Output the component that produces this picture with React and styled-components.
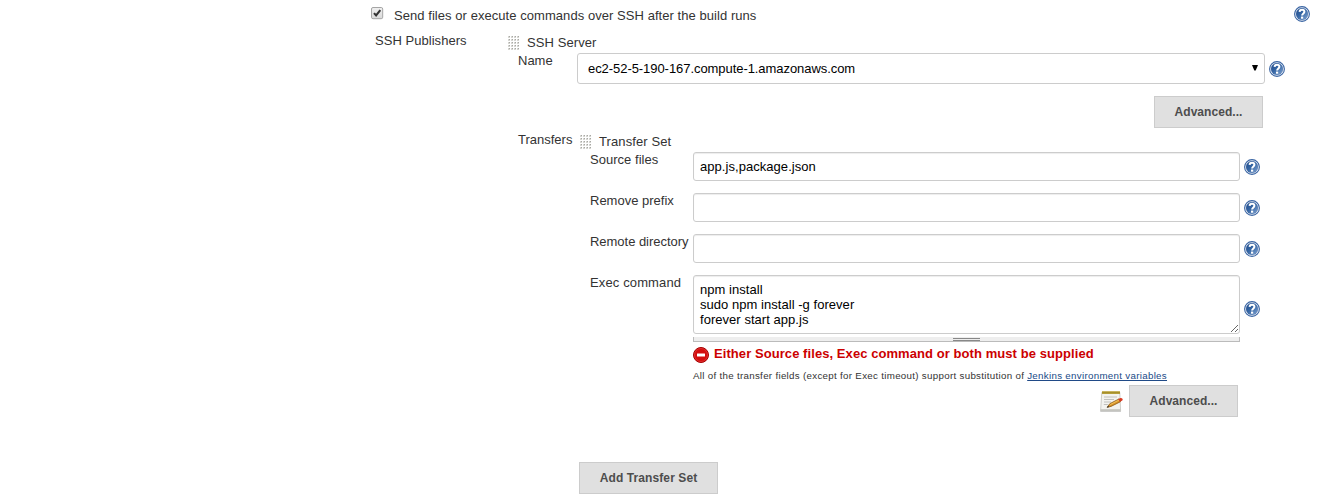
import React from "react";
import styled, { createGlobalStyle } from "styled-components";

const GlobalStyle = createGlobalStyle`
  *, *::before, *::after { box-sizing: border-box; }
  body { margin: 0; background: #fff; overflow: hidden; }
  body, input, textarea, button {
    font-family: "Liberation Sans", Arial, sans-serif;
    font-size: 13px;
    line-height: 15px;
    color: #333;
  }
`;

const Page = styled.main`
  width: 1337px;
  height: 500px;
  overflow: hidden;
  padding-left: 371px;
`;

const Text = styled.span`
  display: inline-block;
  white-space: nowrap;
  letter-spacing: ${(p) => p.$spacing || 0}px;
`;

const OptionRow = styled.label`
  display: flex;
  align-items: flex-start;
  width: 939px;
  height: 33px;
  padding-top: 6px;
`;

const CheckSvg = styled.svg`
  width: 13px;
  height: 13px;
  margin: 1px 10px 0 0;
  flex: none;
`;

const OptionText = styled(Text)`
  flex: 1;
  margin-top: 2px;
`;

const Section = styled.section`
  display: flex;
  align-items: flex-start;
`;

const SectionLabel = styled.div`
  width: ${(p) => p.$width}px;
  flex: none;
  margin-left: ${(p) => p.$left || 0}px;
  white-space: nowrap;
`;

const Block = styled.div`
  display: flex;
  flex-direction: column;
`;

const BlockTitle = styled.div`
  display: flex;
  align-items: flex-start;
  gap: 8px;
  height: ${(p) => p.$height}px;
  padding-top: 2px;
`;

const HandleSvg = styled.svg`
  width: 11px;
  height: 14px;
  margin-top: 1px;
  flex: none;
`;

const Field = styled.div`
  display: flex;
  align-items: ${(p) => p.$align || "flex-start"};
  height: ${(p) => p.$height}px;
  padding-left: 10px;
`;

const FieldLabel = styled.label`
  align-self: flex-start;
  width: ${(p) => p.$width}px;
  flex: none;
  white-space: nowrap;
  letter-spacing: ${(p) => p.$spacing || 0}px;
`;

const SelectBox = styled.div`
  display: flex;
  align-items: center;
  justify-content: space-between;
  width: 688px;
  height: 31px;
  padding: 0 6px 0 10px;
  margin-right: 4px;
  border: 1px solid #ccc;
  border-radius: 3px;
  color: #000;
`;

const Arrow = styled.svg`
  width: 6px;
  height: 6px;
  margin-top: -1px;
`;

const Input = styled.input`
  width: 547px;
  height: 29px;
  padding: 0 6px;
  margin: 0 4px 0 0;
  border: 1px solid #ccc;
  border-radius: 3px;
  box-shadow: inset 0 1px 1px rgba(0, 0, 0, 0.075);
  color: #000;
  outline: none;
  letter-spacing: 0.05px;
`;

const CommandBox = styled.textarea`
  display: block;
  width: 547px;
  height: 59px;
  padding: 6px;
  margin: 0 4px 0 0;
  border: 1px solid #ccc;
  border-radius: 3px;
  box-shadow: inset 0 1px 1px rgba(0, 0, 0, 0.075);
  color: #000;
  outline: none;
  resize: both;
  overflow: hidden;
  letter-spacing: 0.04px;
`;

const HelpSvg = styled.svg`
  width: 16px;
  height: 16px;
  flex: none;
  margin-top: ${(p) => p.$top || 0}px;
`;

const Button = styled.button`
  width: ${(p) => p.$width}px;
  height: 32px;
  padding: 0;
  border: 1px solid #ccc;
  border-radius: 0;
  background: #e0e0e0;
  color: #4d4d4d;
  font-size: 12px;
  font-weight: bold;
  letter-spacing: ${(p) => p.$spacing || 0}px;
`;

const ServerActions = styled.div`
  display: flex;
  justify-content: flex-end;
  width: 755px;
  height: 48px;
  padding-top: 12px;
`;

const Details = styled.div`
  width: 547px;
  margin-left: 113px;
`;

const Grip = styled.div`
  display: flex;
  flex-direction: column;
  align-items: center;
  gap: 1px;
  height: 5px;
  border: solid #bbb;
  border-width: 0 1px 1px;
  background: #eee;
  padding-top: 1px;
`;

const GripLine = styled.span`
  width: 27px;
  height: 1px;
  background: #888;
`;

const ErrorMessage = styled.div`
  display: flex;
  align-items: flex-start;
  gap: 5px;
  height: 28px;
  padding-top: 4px;
  color: #c00;
  font-weight: bold;
`;

const ErrorSvg = styled.svg`
  width: 16px;
  height: 16px;
  margin-top: 1px;
`;

const Note = styled.div`
  height: 15px;
  font-size: 9.75px;
  line-height: 12px;
  white-space: nowrap;
  letter-spacing: ${(p) => p.$spacing}px;
`;

const NoteLink = styled.a`
  color: #204a87;
  text-decoration: underline;
`;

const TransferActions = styled.div`
  display: flex;
  justify-content: flex-end;
  align-items: center;
  gap: 6px;
  width: 545px;
  height: 32px;
`;

const NotepadSvg = styled.svg`
  width: 24px;
  height: 24px;
`;

const AddRow = styled.div`
  margin: 45px 0 0 -1px;
`;

function Checkbox() {
  return (
    <CheckSvg viewBox="0 0 13 13">
      <defs>
        <linearGradient id="check-bg" x2="0" y2="1">
          <stop stopColor="#f0f0f0" />
          <stop offset="1" stopColor="#d9d9d9" />
        </linearGradient>
      </defs>
      <rect x=".5" y=".5" width="11.2" height="11.2" rx="1.5" fill="url(#check-bg)" stroke="#a5a5a5" />
      <path d="M3 6.1 5.1 8.4 9.3 3.2" fill="none" stroke="#333" strokeWidth="2.1" />
    </CheckSvg>
  );
}

function DragHandle() {
  const dots = [];
  for (let y = 0; y < 5; y++)
    for (let x = 0; x < 4; x++)
      dots.push(
        <g key={`${x}-${y}`}>
          <rect x={x * 3} y={y * 3} width="2" height="2" fill="#d6d6d2" />
          <rect x={x * 3 + 1} y={y * 3} width="1" height="1" fill="#a8a8a4" />
        </g>
      );
  return <HandleSvg viewBox="0 0 11 14" shapeRendering="crispEdges">{dots}</HandleSvg>;
}

function Help({ top }) {
  return (
    <HelpSvg viewBox="0 0 16 16" $top={top}>
      <defs>
        <linearGradient id="help-blue" x1="0" y1="0" x2="1" y2="1">
          <stop stopColor="#204a87" />
          <stop offset=".45" stopColor="#3465a4" />
          <stop offset="1" stopColor="#84a6d2" />
        </linearGradient>
      </defs>
      <circle cx="8" cy="8" r="7.4" fill="#fff" stroke="#3964a3" strokeWidth="1.1" />
      <circle cx="8" cy="8" r="6" fill="url(#help-blue)" stroke="#2f5a99" strokeWidth=".3" />
      <path d="M5.6 5.9C5.7 2.9 10.4 3 10.4 5.8 10.4 7.5 8.1 7.4 8.1 9.6" fill="none" stroke="#fff" strokeWidth="2" />
      <rect x="7" y="10.6" width="2.2" height="2.1" fill="#fff" />
    </HelpSvg>
  );
}

function ErrorIcon() {
  return (
    <ErrorSvg viewBox="0 0 16 16">
      <circle cx="8" cy="8" r="7.5" fill="#d40d0d" stroke="#a40000" />
      <circle cx="8" cy="8" r="6.5" fill="none" stroke="#e33c3c" strokeWidth=".7" />
      <rect x="4" y="6.4" width="8" height="3.2" rx=".4" fill="#fff" />
    </ErrorSvg>
  );
}

function Notepad() {
  return (
    <NotepadSvg viewBox="0 0 24 24">
      <path d="M1.3 22h20.6v1H1.3z" fill="#aaa" opacity=".6" />
      <path d="M2.8 3.5h18l.8 18.4H1.6z" fill="#f3f3f0" stroke="#c8c8c3" strokeWidth=".9" />
      <path d="M1.6 20.2h20v1.8h-20z" fill="#c4c4bf" />
      <path d="M3 2.3h18v2.6H3z" fill="#d8bd42" />
      <path d="M3.5 3.6h17.5" stroke="#756217" strokeWidth="2.2" strokeDasharray="1 1" />
      <path d="M5 8h13M5 10.5h10M5 13h7M4.8 15.5h4" stroke="#c1c1be" strokeWidth="1" />
      <path d="m8.2 18.3 2.6-3.6 9.2-4.8 1.5 2.8-9.5 4.7z" fill="#d8952a" stroke="#8c5b16" strokeWidth=".8" />
      <path d="m11.3 15.6 8.9-4.6" stroke="#f3bf55" strokeWidth="1" />
      <path d="m19.3 10 2.1-1c1.9-.6 3.2 1.8 1.5 2.7l-2 1z" fill="#d93a22" />
      <path d="m7.8 18.7 1.2-1.9 1.3 1.1z" fill="#333" />
    </NotepadSvg>
  );
}

function TransferField({ label, value, spacing }) {
  return (
    <Field $height={41}>
      <FieldLabel $width={103} $spacing={spacing}>{label}</FieldLabel>
      <Input readOnly defaultValue={value} aria-label={label} />
      <Help top={7} />
    </Field>
  );
}

function TransferSet() {
  return (
    <Block>
      <BlockTitle $height={20}>
        <DragHandle />
        <Text $spacing={0.1}>Transfer Set</Text>
      </BlockTitle>
      <TransferField label="Source files" value="app.js,package.json" spacing={0.03} />
      <TransferField label="Remove prefix" value="" spacing={0} />
      <TransferField label="Remote directory" value="" spacing={-0.03} />
      <Field $height={62}>
        <FieldLabel $width={103} $spacing={0.13}>Exec command</FieldLabel>
        <CommandBox
          readOnly
          aria-label="Exec command"
          defaultValue={"npm install\nsudo npm install -g forever\nforever start app.js"}
        />
        <Help top={26} />
      </Field>
      <Details>
        <Grip>
          <GripLine />
          <GripLine />
        </Grip>
        <ErrorMessage>
          <ErrorIcon />
          <Text $spacing={0.07}>Either Source files, Exec command or both must be supplied</Text>
        </ErrorMessage>
        <Note $spacing={0.3}>
          All of the transfer fields (except for Exec timeout) support substitution of{" "}
          <NoteLink>Jenkins environment variables</NoteLink>
        </Note>
        <TransferActions>
          <Notepad />
          <Button $width={109} $spacing={0.05}>Advanced...</Button>
        </TransferActions>
      </Details>
      <AddRow>
        <Button $width={139} $spacing={0.1}>Add Transfer Set</Button>
      </AddRow>
    </Block>
  );
}

export default function App() {
  return (
    <Page>
      <GlobalStyle />
      <OptionRow>
        <Checkbox />
        <OptionText $spacing={0.055}>Send files or execute commands over SSH after the build runs</OptionText>
        <Help />
      </OptionRow>
      <Section>
        <SectionLabel $width={133} $left={4}>
          <Text $spacing={0.04}>SSH Publishers</Text>
        </SectionLabel>
        <Block>
          <BlockTitle $height={20}>
            <DragHandle />
            <Text $spacing={0.08}>SSH Server</Text>
          </BlockTitle>
          <Field $height={31} $align="center">
            <FieldLabel $width={59}>Name</FieldLabel>
            <SelectBox>
              <Text $spacing={-0.06}>ec2-52-5-190-167.compute-1.amazonaws.com</Text>
              <Arrow viewBox="0 0 6 6"><path d="M0 0h6L3.7 5.5H2.3z" /></Arrow>
            </SelectBox>
            <Help />
          </Field>
          <ServerActions>
            <Button $width={109} $spacing={0.05}>Advanced...</Button>
          </ServerActions>
          <Section>
            <SectionLabel $width={62} $left={10}>
              <Text>Transfers</Text>
            </SectionLabel>
            <TransferSet />
          </Section>
        </Block>
      </Section>
    </Page>
  );
}
